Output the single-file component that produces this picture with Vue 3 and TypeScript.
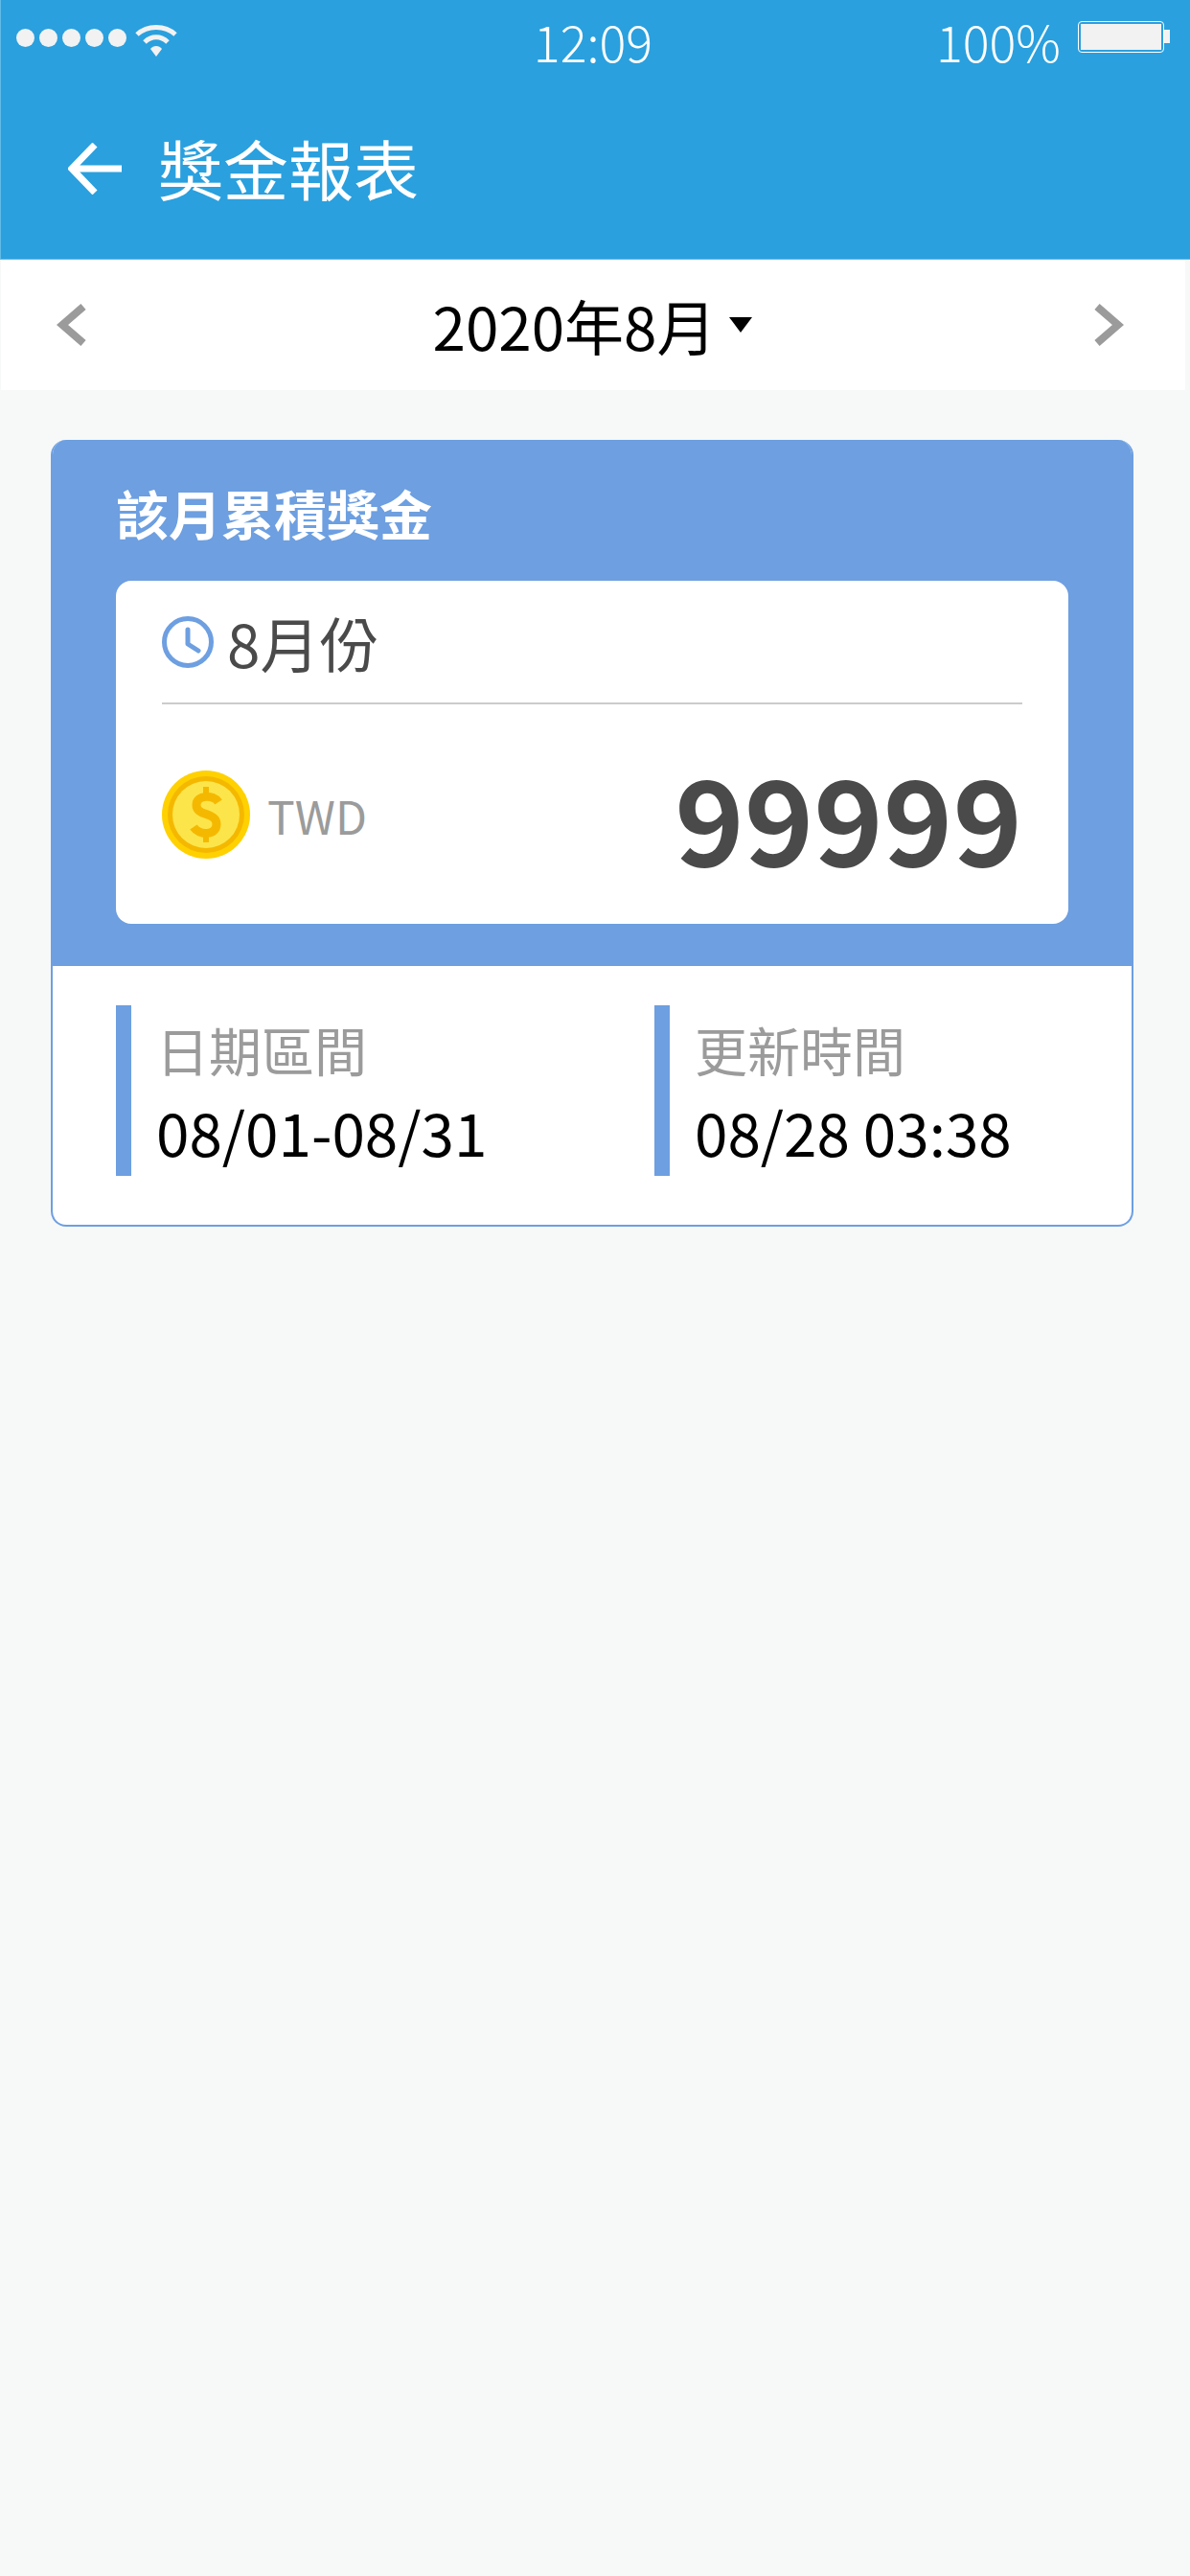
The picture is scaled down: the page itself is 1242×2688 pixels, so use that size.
<script setup lang="ts">
const dots = [1, 2, 3, 4, 5]
const infoItems = [
  { label: '日期區間', value: '08/01-08/31' },
  { label: '更新時間', value: '08/28 03:38' },
]
</script>

<template>
  <div class="page">
    <header class="app-header">
      <div class="status-bar">
        <div class="status-left">
          <span v-for="d in dots" :key="d" class="dot"></span>
          <svg class="wifi" viewBox="0 0 44 34" width="44" height="34">
            <path d="M2 11 C13 1 31 1 42 11" fill="none" stroke="#f2f2f2" stroke-width="5" />
            <path d="M10 19 C17 12 27 12 34 19" fill="none" stroke="#f2f2f2" stroke-width="5" />
            <path d="M16 26 C19 22 25 22 28 26 L22 34 Z" fill="#f2f2f2" />
          </svg>
        </div>
        <div class="status-time">12:09</div>
        <div class="status-right">
          <span class="percent">100%</span>
          <div class="battery">
            <div class="battery-body"><div class="battery-fill"></div></div>
            <div class="battery-nub"></div>
          </div>
        </div>
      </div>
      <div class="title-row">
        <svg class="back" viewBox="0 0 56 54" width="56" height="54">
          <path d="M28 2 L4 27 L28 52 M4 27 H56" fill="none" stroke="#fff" stroke-width="7" />
        </svg>
        <h1 class="title">獎金報表</h1>
      </div>
    </header>

    <nav class="month-nav">
      <svg viewBox="0 0 32 44" width="32" height="44">
        <path d="M28 3 L6 22 L28 41" fill="none" stroke="#9b9b9b" stroke-width="8" />
      </svg>
      <div class="month">
        <span>2020年8月</span>
        <span class="caret"></span>
      </div>
      <svg viewBox="0 0 32 44" width="32" height="44">
        <path d="M4 3 L26 22 L4 41" fill="none" stroke="#9b9b9b" stroke-width="8" />
      </svg>
    </nav>

    <main class="content">
      <section class="card">
        <div class="card-top">
          <h2 class="card-title">該月累積獎金</h2>
          <div class="summary">
            <div class="summary-head">
              <svg class="clock" viewBox="0 0 54 54" width="54" height="54">
                <circle cx="27" cy="27" r="24.5" fill="none" stroke="#6d9fe1" stroke-width="5" />
                <path d="M27 14 V29 L38 36" fill="none" stroke="#6d9fe1" stroke-width="5" stroke-linecap="round" stroke-linejoin="round" />
              </svg>
              <span class="summary-month">8月份</span>
            </div>
            <div class="summary-body">
              <svg class="coin" viewBox="0 0 92 92" width="92" height="92">
                <circle cx="46" cy="46" r="46" fill="#ffd100" />
                <circle cx="46" cy="46" r="40" fill="#f5b800" />
                <circle cx="46" cy="46" r="35" fill="#fce54a" />
                <path d="M59 33 C54 25 36 25 36 36 C36 48 57 43 57 56 C57 68 39 68 33 59" fill="none" stroke="#f5b800" stroke-width="9" />
                <path d="M46 17 V27 M46 65 V75" stroke="#f5b800" stroke-width="6" />
              </svg>
              <span class="currency">TWD</span>
              <span class="amount">99999</span>
            </div>
          </div>
        </div>
        <div class="card-bottom">
          <div v-for="item in infoItems" :key="item.label" class="info">
            <div class="info-label">{{ item.label }}</div>
            <div class="info-value">{{ item.value }}</div>
          </div>
        </div>
      </section>
    </main>
  </div>
</template>

<style>
html, body {
  margin: 0;
  background: #f7f9f8;
}
</style>

<style scoped>
.page {
  width: 1242px;
  height: 2688px;
  overflow: hidden;
  background: #f7f9f8;
  font-family: "Noto Sans CJK TC", "Noto Sans", sans-serif;
}
.app-header {
  height: 271px;
  box-sizing: border-box;
  background: #2aa0de;
  border-bottom: 1px solid #62bbe6;
  border-left: 1px solid #62bbe6;
  color: #fff;
}
.status-bar {
  height: 92px;
  box-sizing: border-box;
  display: grid;
  grid-template-columns: 1fr auto 1fr;
  align-items: center;
  padding: 0 21px 7px 16px;
}
.status-left {
  display: flex;
  align-items: center;
  gap: 5px;
  margin-bottom: -1px;
}
.dot {
  width: 19px;
  height: 19px;
  margin-bottom: 8px;
  border-radius: 50%;
  background: #f2f2f2;
}
.wifi {
  margin-left: 4px;
  margin-bottom: 2px;
}
.status-time, .percent {
  font-size: 52px;
  font-weight: 300;
  line-height: 60px;
}
.status-right {
  display: flex;
  justify-content: flex-end;
  align-items: center;
  gap: 18px;
}
.battery {
  display: flex;
  align-items: center;
  margin-bottom: 9px;
}
.battery-body {
  width: 90px;
  height: 33px;
  box-sizing: border-box;
  border: 1.5px solid #fff;
  border-radius: 4px;
  padding: 2px;
}
.battery-fill {
  height: 100%;
  background: #f2f2f2;
}
.battery-nub {
  width: 6px;
  height: 14px;
  background: #f2f2f2;
}
.title-row {
  display: flex;
  align-items: center;
  gap: 38px;
  padding-left: 70px;
  height: 168px;
}
.title {
  margin: 0 0 2px;
  font-size: 68px;
  font-weight: 400;
  line-height: 80px;
}
.month-nav {
  height: 136px;
  margin: 0 5px 0 1px;
  background: #fff;
  display: flex;
  align-items: center;
  justify-content: space-between;
  padding: 0 64px 0 58px;
}
.month {
  display: flex;
  align-items: center;
  gap: 13px;
  margin-left: 4px;
  font-size: 62px;
  line-height: 80px;
  color: #000;
}
.caret {
  width: 0;
  height: 0;
  border-left: 12.5px solid transparent;
  border-right: 12.5px solid transparent;
  border-top: 16px solid #000;
}
.content {
  padding: 52px 59px 0 53px;
}
.card {
  border-radius: 16px;
  overflow: hidden;
  background: #fff;
  box-sizing: border-box;
  border: 2px solid #6d9fe1;
  border-top: 0;
  height: 821px;
}
.card-top {
  background: #6d9fe1;
  padding: 43px 68px 44px 68px;
  margin: 0 -2px;
}
.card-title {
  margin: 0;
  font-size: 55px;
  font-weight: 700;
  line-height: 64px;
  color: #fff;
}
.summary {
  margin-top: 40px;
  background: #fff;
  border-radius: 16px;
  padding: 0 48px;
  height: 358px;
  box-sizing: border-box;
}
.summary-head {
  height: 129px;
  box-sizing: border-box;
  border-bottom: 2px solid #cccccc;
  display: flex;
  align-items: center;
  gap: 14px;
}
.summary-month {
  font-size: 62px;
  line-height: 70px;
  color: #4a4a4a;
}
.summary-body {
  display: flex;
  align-items: center;
  height: 229px;
}
.currency {
  margin-left: 18px;
  font-size: 48px;
  line-height: 60px;
  color: #9b9b9b;
}
.amount {
  margin-left: auto;
  font-size: 123px;
  font-weight: 700;
  line-height: 140px;
  color: #4a4a4a;
}
.card-bottom {
  display: grid;
  grid-template-columns: 562px 1fr;
  padding: 41px 0 0 66px;
}
.info {
  border-left: 16px solid #6d9fe1;
  height: 178px;
  padding-left: 26px;
  box-sizing: border-box;
  padding-top: 10px;
}
.info-label {
  font-size: 55px;
  line-height: 70px;
  color: #9b9b9b;
}
.info-value {
  margin-top: 13px;
  font-size: 62px;
  line-height: 76px;
  color: #000;
}
</style>
